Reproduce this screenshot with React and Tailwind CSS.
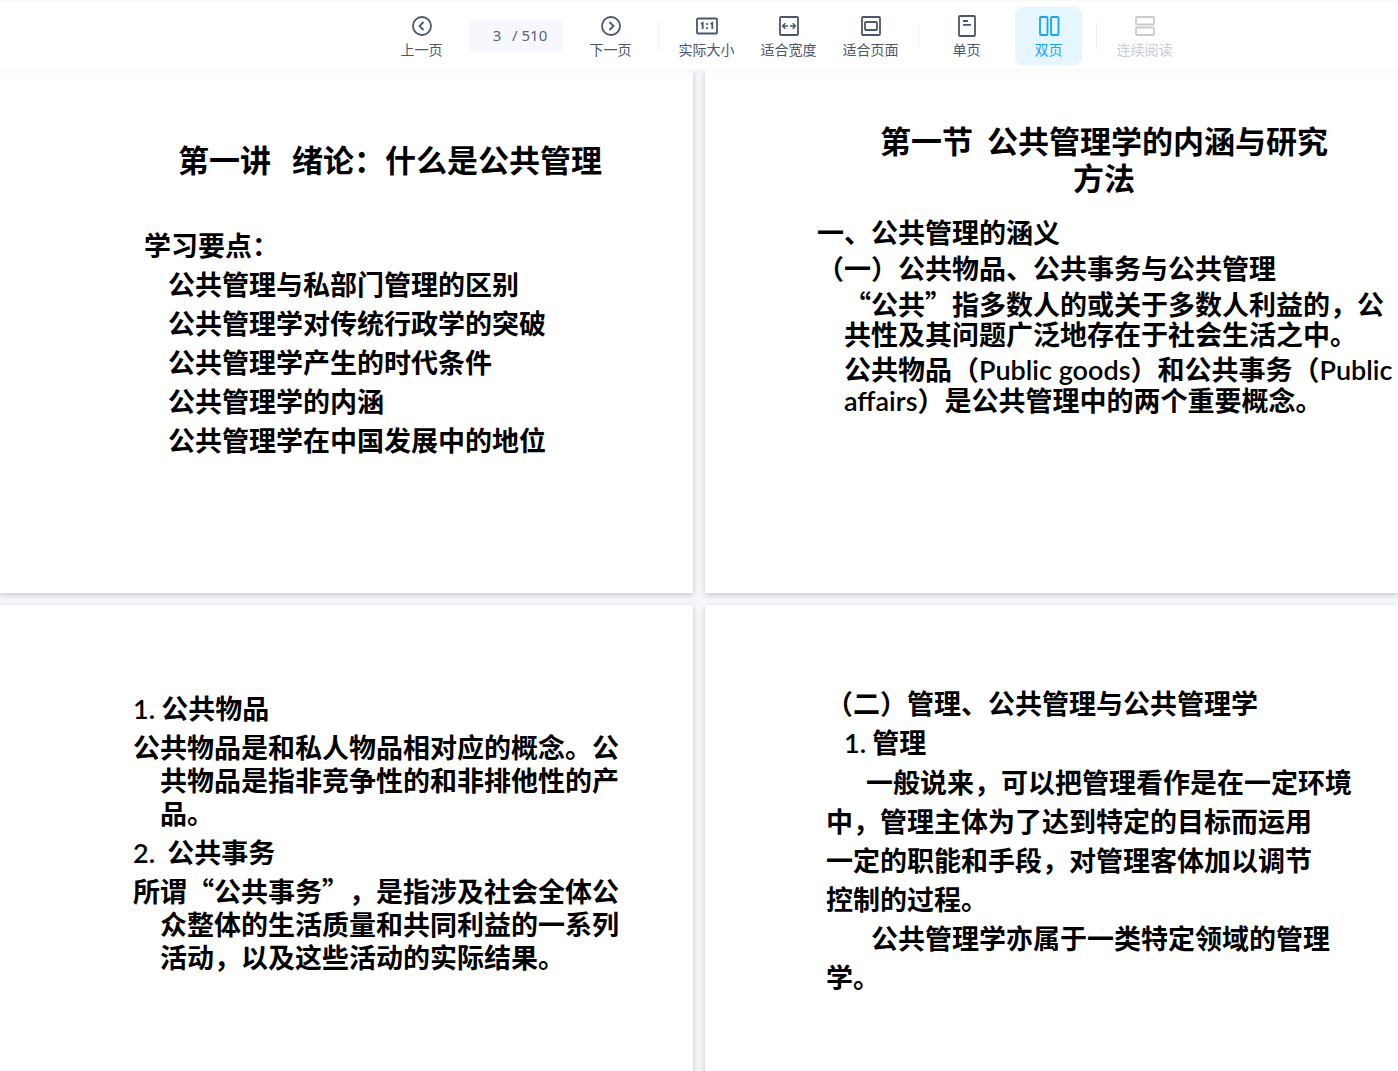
/**
 * PDF reader: toolbar on top, pages shown two by two below it.
 */

import React, { useState } from 'react';
import clsx from 'clsx';

const iconProps = {
  width: 22,
  height: 22,
  viewBox: '0 0 22 22',
  fill: 'none',
  stroke: 'currentColor',
  strokeWidth: 1.8,
  'aria-hidden': true,
};

const PrevIcon = () => (
  <svg {...iconProps}>
    <circle cx="11" cy="11" r="9" />
    <path d="M12.5 7L8.5 11l4 4" />
  </svg>
);

const NextIcon = () => (
  <svg {...iconProps}>
    <circle cx="11" cy="11" r="9" />
    <path d="M9.5 7l4 4-4 4" />
  </svg>
);

const ActualSizeIcon = () => (
  <svg {...iconProps}>
    <rect x="1" y="3.5" width="20" height="15" rx="1" />
    <path d="M5 9.1l1.7-1.1v6M14.6 9.1l1.7-1.1v6" />
    <path d="M10.2 9h1.7M10.2 13h1.7" />
  </svg>
);

const FitWidthIcon = () => (
  <svg {...iconProps}>
    <rect x="2" y="2" width="18" height="18" rx="1" />
    <path d="M4.5 11H10M12 11h5.5M7.3 8.3L4.6 11l2.7 2.7M14.7 8.3l2.7 2.7-2.7 2.7" strokeWidth="1.5" />
  </svg>
);

const FitPageIcon = () => (
  <svg {...iconProps}>
    <rect x="2" y="2" width="18" height="18" rx="1" />
    <rect x="5" y="7" width="12" height="8" rx="1" />
  </svg>
);

const SinglePageIcon = () => (
  <svg {...iconProps}>
    <rect x="3" y="1" width="16" height="20" rx="1" />
    <path d="M7 6h5M7 9.8h8" />
  </svg>
);

const DoublePageIcon = () => (
  <svg {...iconProps}>
    <rect x="2" y="2" width="7.5" height="18" rx="1" />
    <rect x="13" y="2" width="7.5" height="18" rx="1" />
  </svg>
);

const ContinuousIcon = () => (
  <svg {...iconProps}>
    <rect x="2" y="2" width="18" height="7.5" rx="1" />
    <rect x="2" y="12.5" width="18" height="7.5" rx="1" />
  </svg>
);

const ToolButton = ({ icon: Icon, label, active, disabled, onClick }) => (
  <button
    type="button"
    disabled={disabled}
    onClick={onClick}
    className={clsx(
      'flex h-[58px] w-[67px] shrink-0 flex-col items-center rounded-lg pt-2 text-sm leading-6 whitespace-nowrap',
      active && 'bg-[#e5f6ff] text-[#12a5ff]',
      disabled && 'text-[#c9cbd0]',
      !active && !disabled && 'text-[#4a566c]'
    )}
  >
    <Icon />
    {label}
  </button>
);

const Divider = () => <div className="h-7 w-px shrink-0 bg-[#eeeff5]" />;

const Toolbar = () => {
  const [page, setPage] = useState(3);
  const [layout, setLayout] = useState('double');

  return (
    <header className="z-10 flex h-[71px] shrink-0 items-center justify-center gap-[14px] border-t-2 border-b-2 border-[#fafafa] bg-white pl-[168px] shadow-[0_1px_6px_rgba(0,0,0,0.03)]">
      <ToolButton icon={PrevIcon} label="上一页" onClick={() => setPage(Math.max(1, page - 1))} />
      <div className="flex h-8 w-[94px] shrink-0 items-center rounded bg-[#f7f8fd] pl-4 font-['Noto_Sans'] text-[15px] text-[#5a6478]">
        <input
          aria-label="页码"
          value={page}
          onChange={(e) => setPage(Number(e.target.value) || 1)}
          className="w-6 bg-transparent text-center outline-none"
        />
        <span className="pl-[3px] whitespace-nowrap">/ 510</span>
      </div>
      <ToolButton icon={NextIcon} label="下一页" onClick={() => setPage(Math.min(510, page + 1))} />
      <Divider />
      <div className="flex gap-[15px]">
        <ToolButton icon={ActualSizeIcon} label="实际大小" />
        <ToolButton icon={FitWidthIcon} label="适合宽度" />
        <ToolButton icon={FitPageIcon} label="适合页面" />
      </div>
      <Divider />
      <div className="flex gap-[15px]">
        <ToolButton
          icon={SinglePageIcon}
          label="单页"
          active={layout === 'single'}
          onClick={() => setLayout('single')}
        />
        <ToolButton
          icon={DoublePageIcon}
          label="双页"
          active={layout === 'double'}
          onClick={() => setLayout('double')}
        />
      </div>
      <Divider />
      <ToolButton icon={ContinuousIcon} label="连续阅读" disabled />
    </header>
  );
};

const Page = ({ className, children }) => (
  <article
    className={clsx(
      'h-[522px] overflow-hidden bg-white text-[27px] font-bold whitespace-nowrap text-black shadow-[0_2px_6px_rgba(0,0,0,0.2)] [text-spacing-trim:space-all]',
      className
    )}
  >
    {children}
  </article>
);

// Latin words and digits are set in a humanist sans
const Latin = ({ children }) => <span className="font-['Lato'] font-semibold">{children}</span>;

const App = () => {
  return (
    <div className="flex h-screen flex-col overflow-hidden bg-[#f6f7fb] font-['Noto_Sans_CJK_SC',sans-serif]">
      <Toolbar />
      <main className="grid min-h-0 flex-1 grid-cols-2 content-start gap-3 overflow-hidden">
        <Page className="pt-[68px] pl-[144px] leading-[39px]">
          <h1 className="pl-[34px] text-[31px]">第一讲&nbsp;&nbsp; 绪论：什么是公共管理</h1>
          <p className="pt-[47px]">学习要点：</p>
          <ul className="pl-6">
            <li>公共管理与私部门管理的区别</li>
            <li>公共管理学对传统行政学的突破</li>
            <li>公共管理学产生的时代条件</li>
            <li>公共管理学的内涵</li>
            <li>公共管理学在中国发展中的地位</li>
          </ul>
        </Page>

        <Page className="pt-[50px] pl-28 leading-[30px]">
          <h1 className="w-[574px] text-center text-[31px] leading-[37px]">
            第一节&nbsp; 公共管理学的内涵与研究
            <br />
            方法
          </h1>
          <h2 className="pt-[22px]">一、公共管理的涵义</h2>
          <h3 className="pt-[6px]">（一）公共物品、公共事务与公共管理</h3>
          <p className="pt-[6px] pl-[27px]">
            “公共”指多数人的或关于多数人利益的，公
            <br />
            共性及其问题广泛地存在于社会生活之中。
          </p>
          <p className="pt-[5px] pl-[27px]">
            公共物品（<Latin>Public goods</Latin>）和公共事务（<Latin>Public</Latin>
            <br />
            <Latin>affairs</Latin>）是公共管理中的两个重要概念。
          </p>
        </Page>

        <Page className="pt-[86px] pl-[133px] leading-[33px]">
          <h2>
            <Latin>1.</Latin> 公共物品
          </h2>
          <p className="pt-[5px] pl-[27px] -indent-[27px]">
            公共物品是和私人物品相对应的概念。公
            <br />
            共物品是指非竞争性的和非排他性的产
            <br />
            品。
          </p>
          <h2 className="pt-[6px]">
            <Latin>2.</Latin>&nbsp; 公共事务
          </h2>
          <p className="pt-[5px] pl-[27px] -indent-[27px]">
            所谓“公共事务”，是指涉及社会全体公
            <br />
            众整体的生活质量和共同利益的一系列
            <br />
            活动，以及这些活动的实际结果。
          </p>
        </Page>

        <Page className="pt-[78px] pl-[121px] leading-[39px]">
          <h2>（二）管理、公共管理与公共管理学</h2>
          <h3 className="pl-[18px]">
            <Latin>1.</Latin> 管理
          </h3>
          <p className="indent-10">
            一般说来，可以把管理看作是在一定环境
            <br />
            中，管理主体为了达到特定的目标而运用
            <br />
            一定的职能和手段，对管理客体加以调节
            <br />
            控制的过程。
          </p>
          <p className="indent-[45px]">
            公共管理学亦属于一类特定领域的管理
            <br />
            学。
          </p>
        </Page>
      </main>
    </div>
  );
};

export default App;
